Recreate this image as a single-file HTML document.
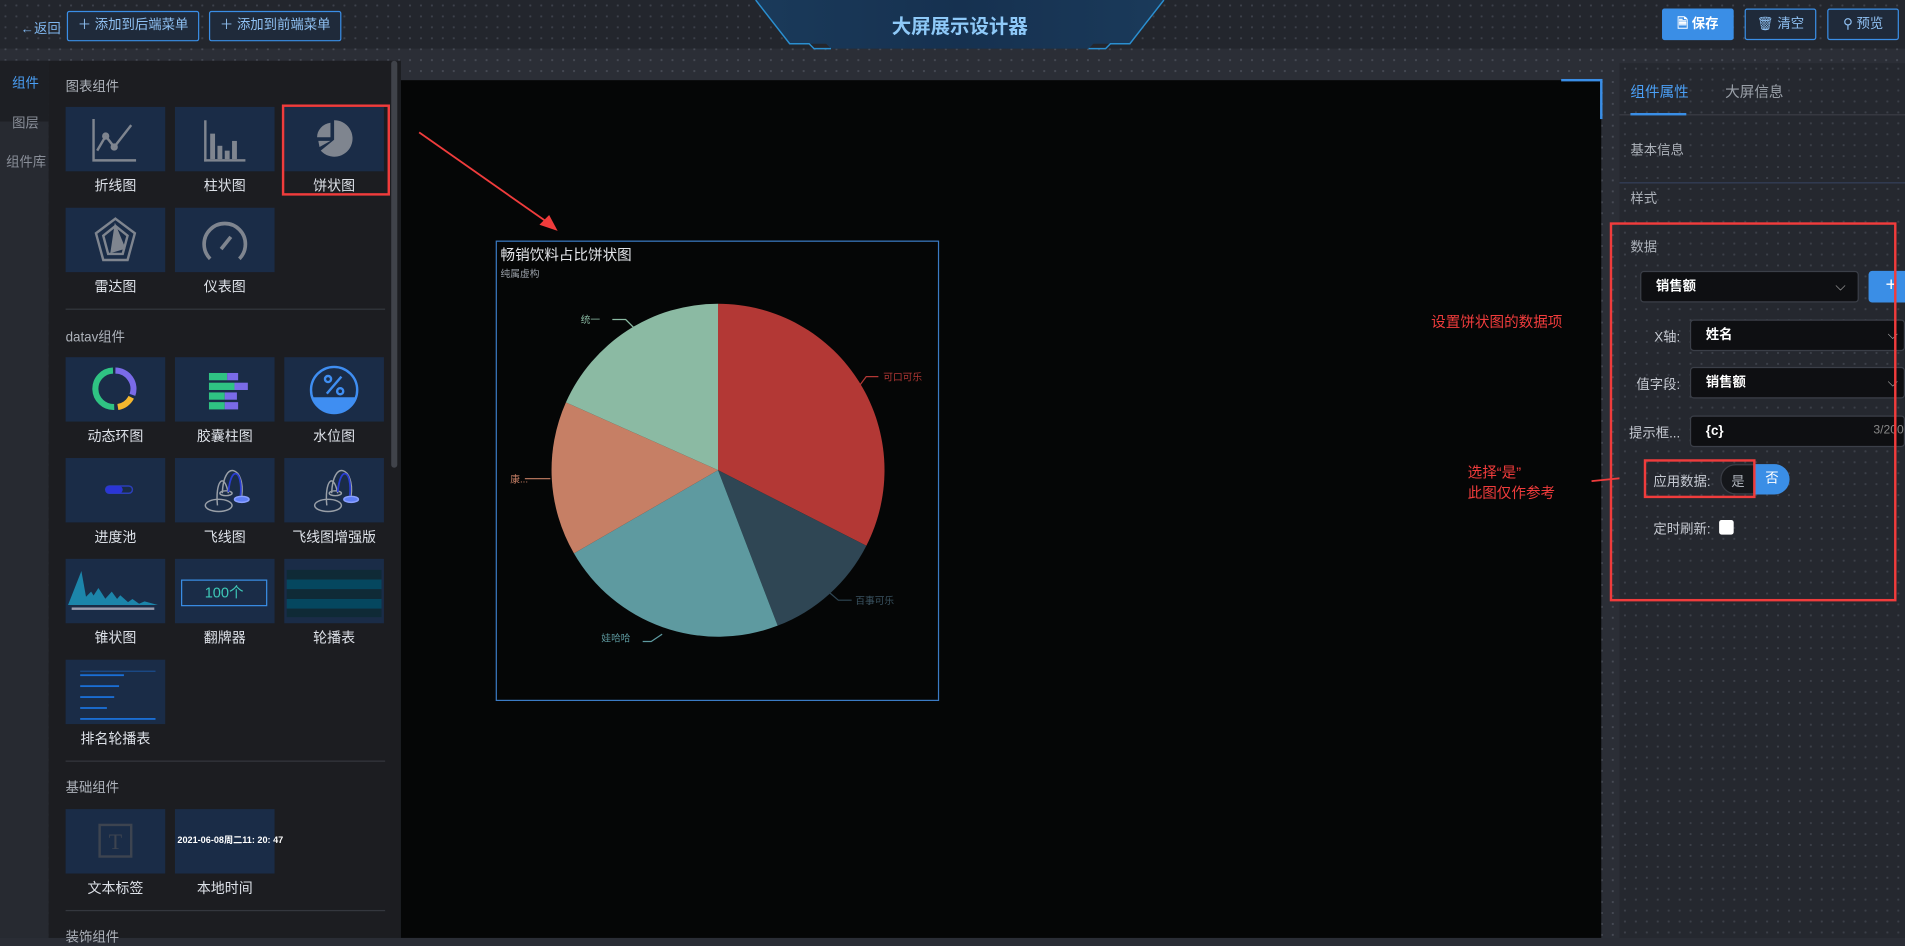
<!DOCTYPE html>
<html><head><meta charset="utf-8"><style>
*{margin:0;padding:0;box-sizing:border-box}
html,body{width:1905px;height:938px;overflow:hidden;background:#2a2d35}
#s{position:absolute;left:0;top:0;width:1568px;height:772px;transform:scale(1.21492);transform-origin:0 0;font-family:"Liberation Sans","Noto Sans CJK SC",sans-serif;font-size:11px;color:#c8ccd4;
background-color:#2b2e36;background-image:radial-gradient(#464a54 0.8px,transparent 1px);background-size:9px 9px}
.a{position:absolute}
.t{white-space:nowrap}
.tile{position:absolute;width:82px;height:53px;background:#1a2c47}
.lbl{position:absolute;width:82px;text-align:center;font-size:11.5px;color:#dde1e8}
.btn{position:absolute;border:1px solid #3a8ee6;border-radius:2px;color:#8fc0f2;font-size:11px;text-align:center;background:#1f2a3a}
.sel{position:absolute;background:#0e0f12;border:1px solid #3b3f48;border-radius:3px;color:#fff;font-weight:bold;font-size:11px;padding-left:12px}
.lab{position:absolute;font-size:11px;color:#c6cad2;text-align:right;white-space:nowrap}
</style></head><body><div id="s">
<div class="a" style="left:0;top:0;width:1568px;height:40px;background-color:#23262d;background-image:radial-gradient(#3d414b 0.8px,transparent 1px);background-size:9px 9px"></div>
<svg class="a" style="left:600px;top:0" width="380" height="42"><defs><linearGradient id="g" x1="0" x2="1"><stop offset="0" stop-color="#1a3a5a"/><stop offset=".5" stop-color="#163150"/><stop offset="1" stop-color="#1a3a5a"/></linearGradient></defs><polygon points="22,0 358,0 330,36 300,36 296,40 84,40 80,36 50,36" fill="url(#g)"/><polyline points="22,0 50,36 66,36 70,40 84,40" fill="none" stroke="#2a8fd0" stroke-width="1.2"/><polyline points="358,0 330,36 314,36 310,40 296,40" fill="none" stroke="#2a8fd0" stroke-width="1.2"/></svg>
<div class="a t" style="left:730px;top:8px;width:120px;text-align:center;font-size:16px;font-weight:bold;color:#8ec9f8">大屏展示设计器</div>
<div class="a t" style="left:17px;top:15px;color:#7fb6ee;font-size:11px">←返回</div>
<div class="btn" style="left:55px;top:9px;width:109px;height:25px;line-height:23px">＋ 添加到后端菜单</div>
<div class="btn" style="left:172px;top:9px;width:109px;height:25px;line-height:23px">＋ 添加到前端菜单</div>
<div class="btn" style="left:1368px;top:7px;width:59px;height:26px;line-height:24px;background:#3a8ee6;color:#fff;font-weight:bold">🗎 保存</div>
<div class="btn" style="left:1436px;top:7px;width:59px;height:26px;line-height:24px">🗑 清空</div>
<div class="btn" style="left:1504px;top:7px;width:59px;height:26px;line-height:24px">⚲ 预览</div>
<div class="a" style="left:0;top:50px;width:40px;height:722px;background:#272a31"></div>
<div class="a" style="left:0;top:50px;width:40px;height:50px;background:#1d1f24"></div>
<div class="a t" style="left:10px;top:60px;color:#4a9ff5">组件</div>
<div class="a t" style="left:10px;top:93px;color:#8a8f99">图层</div>
<div class="a t" style="left:5px;top:125px;color:#8a8f99">组件库</div>
<div class="a" style="left:40px;top:50px;width:290px;height:722px;background:#1c1d21"></div>
<div class="a" style="left:322px;top:50px;width:5px;height:335px;background:#40434a;border-radius:3px"></div>
<div class="a t" style="left:54px;top:63px;color:#aeb3bb">图表组件</div>
<div class="a t" style="left:54px;top:269px;color:#aeb3bb">datav组件</div>
<div class="a t" style="left:54px;top:640px;color:#aeb3bb">基础组件</div>
<div class="a t" style="left:54px;top:763px;color:#aeb3bb">装饰组件</div>
<div class="a" style="left:54px;top:254px;width:263px;height:1px;background:#34373e"></div>
<div class="a" style="left:54px;top:626px;width:263px;height:1px;background:#34373e"></div>
<div class="a" style="left:54px;top:749px;width:263px;height:1px;background:#34373e"></div>

<div class="tile" style="left:54px;top:88px"><svg width="82" height="53" fill="none" stroke="#7f858f" stroke-width="2"><polyline points="23,10 23,44 58,44"/><polyline points="26,36 33,24 40,33 54,15"/><circle cx="33" cy="24" r="2"/><circle cx="40" cy="33" r="2"/></svg></div>
<div class="tile" style="left:144px;top:88px"><svg width="82" height="53" fill="#7f858f"><rect x="24" y="11" width="2" height="34"/><rect x="24" y="43" width="34" height="2"/><rect x="29" y="22" width="4" height="21"/><rect x="35" y="32" width="4" height="11"/><rect x="41" y="36" width="4" height="7"/><rect x="47" y="28" width="4" height="15"/></svg></div>
<div class="tile" style="left:234px;top:88px"><svg width="82" height="53" fill="#7f858f"><path d="M41,11 A15,15 0 1 1 30,36 L41,27 Z"/><path d="M38,13 L38,25 L27,25 A13,12 0 0 1 38,13Z"/><path d="M28,28 L38,28 L29,33 Z"/></svg></div>
<div class="tile" style="left:54px;top:171px"><svg width="82" height="53" fill="none" stroke="#7f858f" stroke-width="2"><polygon points="41,9 57,21 51,43 31,43 25,21"/><polygon points="41,15 51,23 47,38 35,38 31,23"/><polygon points="41,16 48,33 38,36" fill="#7f858f"/></svg></div>
<div class="tile" style="left:144px;top:171px"><svg width="82" height="53" fill="none" stroke="#7f858f" stroke-width="3"><path d="M29,42 A17,17 0 1 1 53,42"/><path d="M38,34 L46,24" stroke-width="3"/></svg></div>
<div class="lbl" style="left:54px;top:145px">折线图</div><div class="lbl" style="left:144px;top:145px">柱状图</div><div class="lbl" style="left:234px;top:145px">饼状图</div>
<div class="lbl" style="left:54px;top:228px">雷达图</div><div class="lbl" style="left:144px;top:228px">仪表图</div>

<div class="tile" style="left:54px;top:294px"><svg width="82" height="53" fill="none" stroke-width="5"><path d="M41,11 A15,15 0 0 1 55,31" stroke="#7a6be8"/><path d="M54,33 A15,15 0 0 1 43,41" stroke="#f5b82e"/><path d="M40,41 A15,15 0 0 1 39,11" stroke="#2fc383"/></svg></div>
<div class="tile" style="left:144px;top:294px"><svg width="82" height="53"><rect x="28" y="13" width="15" height="6" fill="#2fc383"/><rect x="43" y="13" width="9" height="6" fill="#7a6be8"/><rect x="28" y="21" width="21" height="6" fill="#2fc383"/><rect x="49" y="21" width="11" height="6" fill="#7a6be8"/><rect x="28" y="29" width="13" height="6" fill="#2fc383"/><rect x="41" y="29" width="10" height="6" fill="#7a6be8"/><rect x="28" y="37" width="13" height="6" fill="#2fc383"/><rect x="41" y="37" width="11" height="6" fill="#7a6be8"/></svg></div>
<div class="tile" style="left:234px;top:294px"><svg width="82" height="53" fill="none" stroke="#3f8ef2" stroke-width="2"><circle cx="41" cy="27" r="19"/><path d="M24,34 L58,34 A19,19 0 0 1 24,34Z" fill="#3f8ef2"/><path d="M35,30 L47,16"/><circle cx="36" cy="18" r="2.5"/><circle cx="46" cy="28" r="2.5"/></svg></div>
<div class="tile" style="left:54px;top:377px"><svg width="82" height="53"><rect x="33" y="23" width="22" height="6" rx="3" fill="none" stroke="#2b3fb8" stroke-width="1.2"/><rect x="33" y="23" width="14" height="6" rx="3" fill="#2b35d6"/></svg></div>
<div class="tile" style="left:144px;top:377px"><svg width="82" height="53" fill="none" stroke="#9aa0a8" stroke-width="1.2"><ellipse cx="36" cy="39" rx="11" ry="5"/><ellipse cx="42" cy="29" rx="5" ry="2"/><path d="M35,39 C33,20 40,10 44,29"/><path d="M39,29 C40,0 58,8 55,31" /><path d="M44,28 C46,5 56,10 54,31" stroke="#2a3ed0" stroke-width="1.5"/><ellipse cx="55" cy="34" rx="6" ry="2.5" fill="#5f7ff5" stroke="#8aa0ff"/></svg></div>
<div class="tile" style="left:234px;top:377px"><svg width="82" height="53" fill="none" stroke="#9aa0a8" stroke-width="1.2"><ellipse cx="36" cy="39" rx="11" ry="5"/><ellipse cx="42" cy="29" rx="5" ry="2"/><path d="M35,39 C33,20 40,10 44,29"/><path d="M39,29 C40,0 58,8 55,31" /><path d="M44,28 C46,5 56,10 54,31" stroke="#2a3ed0" stroke-width="1.5"/><ellipse cx="55" cy="34" rx="6" ry="2.5" fill="#5f7ff5" stroke="#8aa0ff"/></svg></div>
<div class="lbl" style="left:54px;top:351px">动态环图</div><div class="lbl" style="left:144px;top:351px">胶囊柱图</div><div class="lbl" style="left:234px;top:351px">水位图</div>
<div class="lbl" style="left:54px;top:434px">进度池</div><div class="lbl" style="left:144px;top:434px">飞线图</div><div class="lbl" style="left:234px;top:434px">飞线图增强版</div>

<div class="tile" style="left:54px;top:460px"><svg width="82" height="53" fill="#1d8fb5" opacity=".9"><path d="M2,38 L13,10 L18,38Z"/><path d="M10,38 L21,27 L28,38Z"/><path d="M18,38 L27,24 L36,38Z"/><path d="M28,38 L38,27 L46,38Z"/><path d="M38,38 L45,30 L54,38Z"/><path d="M48,38 L55,33 L62,38Z"/><path d="M58,38 L65,35 L76,38Z"/><rect x="5" y="40" width="68" height="2" fill="#aab"/></svg></div>
<div class="tile" style="left:144px;top:460px"><div class="a" style="left:5px;top:17px;width:71px;height:22px;border:1px solid #3a8ee6;color:#3ec9b8;font-size:12px;text-align:center;line-height:20px">100个</div></div>
<div class="tile" style="left:234px;top:460px"><svg width="82" height="53"><rect x="2" y="9" width="78" height="8" fill="#0f2a36"/><rect x="2" y="17" width="78" height="8" fill="#05475f"/><rect x="2" y="25" width="78" height="8" fill="#0f2a36"/><rect x="2" y="33" width="78" height="8" fill="#05475f"/><rect x="2" y="41" width="78" height="7" fill="#0f2a36"/></svg></div>
<div class="tile" style="left:54px;top:543px"><svg width="82" height="53" fill="#1a6fd6"><rect x="12" y="9" width="62" height="1" opacity=".5"/><rect x="12" y="12" width="36" height="1.5"/><rect x="12" y="21" width="32" height="1.5"/><rect x="12" y="30" width="28" height="1.5"/><rect x="12" y="39" width="22" height="1.5"/><rect x="12" y="48" width="62" height="1.5"/></svg></div>
<div class="lbl" style="left:54px;top:517px">锥状图</div><div class="lbl" style="left:144px;top:517px">翻牌器</div><div class="lbl" style="left:234px;top:517px">轮播表</div>
<div class="lbl" style="left:54px;top:600px">排名轮播表</div>
<div class="tile" style="left:54px;top:666px"><svg width="82" height="53" fill="none" stroke="#3d4450" stroke-width="2"><rect x="28" y="13" width="26" height="26"/><text x="41" y="33" font-size="18" fill="#3d4450" stroke="none" text-anchor="middle" font-family="Liberation Serif">T</text></svg></div>
<div class="tile" style="left:144px;top:666px"><div class="a t" style="left:2px;top:20px;font-size:7.5px;color:#fff;font-weight:bold">2021-06-08周二11: 20: 47</div></div>
<div class="lbl" style="left:54px;top:723px">文本标签</div><div class="lbl" style="left:144px;top:723px">本地时间</div>
<div class="a" style="left:232px;top:86px;width:89px;height:75px;border:2px solid #f03c3c"></div>

<div class="a" style="left:330px;top:66px;width:988px;height:706px;background:#050606"></div>
<div class="a" style="left:1285px;top:65px;width:34px;height:2px;background:#3a8ee6"></div>
<div class="a" style="left:1317px;top:65px;width:2px;height:33px;background:#3a8ee6"></div>
<div class="a" style="left:408px;top:198px;width:365px;height:379px;border:1.5px solid #3b7bc4"></div>
<div class="a t" style="left:412px;top:201px;font-size:12px;color:#e4e6ea">畅销饮料占比饼状图</div>
<div class="a t" style="left:412px;top:220px;font-size:8px;color:#9aa0a8">纯属虚构</div>
<svg class="a" style="left:0;top:0" width="1568" height="772">
<path d="M591,387 L591,250 A137,137 0 0 1 713.1,449.2Z" fill="#b33835"/>
<path d="M591,387 L713.1,449.2 A137,137 0 0 1 640.1,515Z" fill="#2f4654"/>
<path d="M591,387 L640.1,515 A137,137 0 0 1 472.4,455.5Z" fill="#5e9aa0"/>
<path d="M591,387 L472.4,455.5 A137,137 0 0 1 465.8,331.2Z" fill="#c67f65"/>
<path d="M591,387 L465.8,331.2 A137,137 0 0 1 591,250Z" fill="#8bbaa3"/>
<polyline points="707,318 713,310 723,310" fill="none" stroke="#b33835"/>
<polyline points="683,488 690,494 701,494" fill="none" stroke="#2f4654"/>
<polyline points="529,528 536,528 545,522" fill="none" stroke="#5e9aa0"/>
<polyline points="432,394 453,394" fill="none" stroke="#c67f65"/>
<polyline points="504,263 515,263 524,272" fill="none" stroke="#8bbaa3"/>
<text x="727" y="313" font-size="8" fill="#b33835">可口可乐</text>
<text x="704" y="497" font-size="8" fill="#3b5462">百事可乐</text>
<text x="495" y="528" font-size="8" fill="#5e9aa0">娃哈哈</text>
<text x="420" y="397" font-size="8" fill="#c67f65">康...</text>
<text x="478" y="266" font-size="8" fill="#8bbaa3">统一</text>
<line x1="345" y1="109" x2="452" y2="184" stroke="#f03c3c" stroke-width="1.5"/>
<polygon points="459,190 444,185 452,177" fill="#f03c3c"/>
<line x1="1310" y1="396" x2="1340" y2="393" stroke="#f03c3c" stroke-width="1.5"/>
<polygon points="1353,392 1339,386 1340,399" fill="#f03c3c"/>
</svg>
<div class="a t" style="left:1178px;top:256px;font-size:12px;color:#f03c3c">设置饼状图的数据项</div>
<div class="a t" style="left:1208px;top:381px;font-size:12px;color:#f03c3c;line-height:17px">选择“是”<br>此图仅作参考</div>

<div class="a" style="left:1333px;top:52px;width:235px;height:720px;background-color:#25282f;background-image:radial-gradient(#3c4049 0.8px,transparent 1px);background-size:9px 9px"></div>
<div class="a t" style="left:1342px;top:67px;font-size:12px;color:#4a9ff5">组件属性</div>
<div class="a t" style="left:1420px;top:67px;font-size:12px;color:#9aa0a8">大屏信息</div>
<div class="a" style="left:1333px;top:94px;width:235px;height:1px;background:#3a3d45"></div>
<div class="a" style="left:1342px;top:93px;width:46px;height:2px;background:#3a8ee6"></div>
<div class="a t" style="left:1342px;top:115px;color:#aeb3bb">基本信息</div>
<div class="a" style="left:1333px;top:150px;width:235px;height:1px;background:#35405a"></div>
<div class="a t" style="left:1342px;top:155px;color:#aeb3bb">样式</div>
<div class="a t" style="left:1342px;top:195px;color:#aeb3bb">数据</div>
<div class="sel" style="left:1350px;top:223px;width:180px;height:26px;line-height:24px">销售额<span style="position:absolute;right:10px;color:#aaa;font-weight:normal">⌵</span></div>
<div class="a" style="left:1538px;top:223px;width:30px;height:26px;background:#3a8ee6;border-radius:3px 0 0 3px;color:#fff;font-size:16px;line-height:24px;padding-left:14px">+</div>
<div class="lab" style="left:1340px;top:269px;width:43px">X轴:</div>
<div class="sel" style="left:1391px;top:263px;width:177px;height:26px;line-height:24px">姓名<span style="position:absolute;right:5px;color:#aaa;font-weight:normal">⌵</span></div>
<div class="lab" style="left:1340px;top:308px;width:43px">值字段:</div>
<div class="sel" style="left:1391px;top:302px;width:177px;height:26px;line-height:24px">销售额<span style="position:absolute;right:5px;color:#aaa;font-weight:normal">⌵</span></div>
<div class="lab" style="left:1340px;top:348px;width:43px">提示框...</div>
<div class="sel" style="left:1391px;top:342px;width:177px;height:26px;line-height:24px">{c}<span style="position:absolute;right:0;color:#888;font-weight:normal;font-size:10px">3/200</span></div>
<div class="lab" style="left:1360px;top:388px;width:48px">应用数据:</div>
<div class="a" style="left:1416px;top:382px;width:57px;height:25px;border-radius:13px;background:#15171b;border:1px solid #3a3d45"></div>
<div class="a" style="left:1444px;top:382px;width:29px;height:25px;border-radius:0 13px 13px 0;background:#3a8ee6;color:#fff;text-align:center;line-height:25px">否</div>
<div class="a" style="left:1425px;top:388px;color:#aeb3bb">是</div>
<div class="lab" style="left:1360px;top:427px;width:48px">定时刷新:</div>
<div class="a" style="left:1415px;top:428px;width:12px;height:12px;background:#fff;border-radius:2px"></div>
<div class="a" style="left:1325px;top:183px;width:236px;height:312px;border:2px solid #f03c3c"></div>
<div class="a" style="left:1353px;top:378px;width:92px;height:32px;border:2px solid #f03c3c"></div>
</div></body></html>
